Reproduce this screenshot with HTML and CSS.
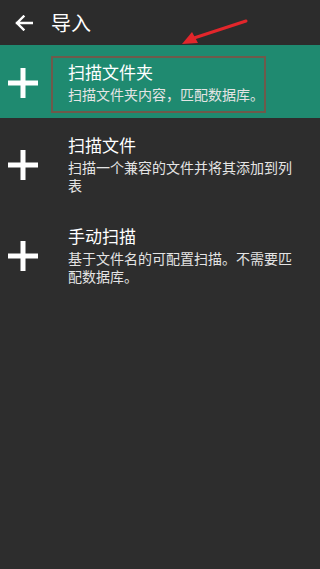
FILE: index.html
```html
<!DOCTYPE html>
<html lang="zh-CN">
<head>
    <meta charset="UTF-8">
    <meta name="viewport" content="width=device-width, initial-scale=1.0">
    <title>导入</title>
    <link rel="stylesheet" href="styles.css">
</head>
<body>
    <div class="header">
        <svg class="back" width="18" height="16" viewBox="0 0 18 16">
            <path d="M17 8H2M8.5 1.5L2 8l6.5 6.5" fill="none" stroke="#fff" stroke-width="2.4" stroke-linecap="square"/>
        </svg>
        <h1>导入</h1>
        <!-- 注释用の赤い矢印 -->
        <svg class="mark-arrow" width="70" height="28" viewBox="0 0 70 28">
            <path d="M66 2L14 19" stroke="#e2262b" stroke-width="3" stroke-linecap="round"/>
            <path d="M2 25L12 13L18 24Z" fill="#e2262b"/>
        </svg>
    </div>

    <div class="list">
        <div class="item active">
            <svg class="plus" width="30" height="30" viewBox="0 0 30 30">
                <path d="M0 15H30M15 0V30" stroke="#fff" stroke-width="5"/>
            </svg>
            <div class="text">
                <div class="title">扫描文件夹</div>
                <div class="desc">扫描文件夹内容，匹配数据库。</div>
            </div>
            <div class="mark-box"></div>
        </div>
        <div class="item">
            <svg class="plus" width="30" height="30" viewBox="0 0 30 30">
                <path d="M0 15H30M15 0V30" stroke="#fff" stroke-width="5"/>
            </svg>
            <div class="text">
                <div class="title">扫描文件</div>
                <div class="desc">扫描一个兼容的文件并将其添加到列表</div>
            </div>
        </div>
        <div class="item">
            <svg class="plus" width="30" height="30" viewBox="0 0 30 30">
                <path d="M0 15H30M15 0V30" stroke="#fff" stroke-width="5"/>
            </svg>
            <div class="text">
                <div class="title">手动扫描</div>
                <div class="desc">基于文件名的可配置扫描。不需要匹配数据库。</div>
            </div>
        </div>
    </div>
</body>
</html>
```

FILE: styles.css
```css
body {
    font-family: "Noto Sans CJK SC", "Noto Sans", sans-serif;
    margin: 0;
    padding: 0;
    background-color: #2d2d2d;
    color: #fff;
}

.header {
    position: relative;
    display: flex;
    align-items: center;
    gap: 18px;
    height: 45px;
    padding-left: 15px;
    background-color: #2c2c2c;
}

.header h1 {
    margin: 0;
    font-size: 20px;
    font-weight: normal;
    line-height: 1;
}

/* 注释 */
.mark-arrow {
    position: absolute;
    left: 180px;
    top: 19px;
}

.list {
    display: flex;
    flex-direction: column;
}

.item {
    position: relative;
    display: flex;
    align-items: center;
    gap: 30px;
    padding: 16px 20px 15px 8px;
}

.item.active {
    background-color: #1f8a70;
}

.plus {
    flex-shrink: 0;
    margin-top: 2px;
}

.text {
    flex-grow: 1;
    max-width: 232px;
}

.title {
    font-size: 17px;
    line-height: 22px;
    margin-bottom: 2px;
}

.desc {
    font-size: 14px;
    line-height: 18px;
    color: #e4e4e4;
}

.mark-box {
    position: absolute;
    left: 51px;
    top: 11px;
    width: 211px;
    height: 53px;
    border: 2px solid #6f5a4b;
}
```
